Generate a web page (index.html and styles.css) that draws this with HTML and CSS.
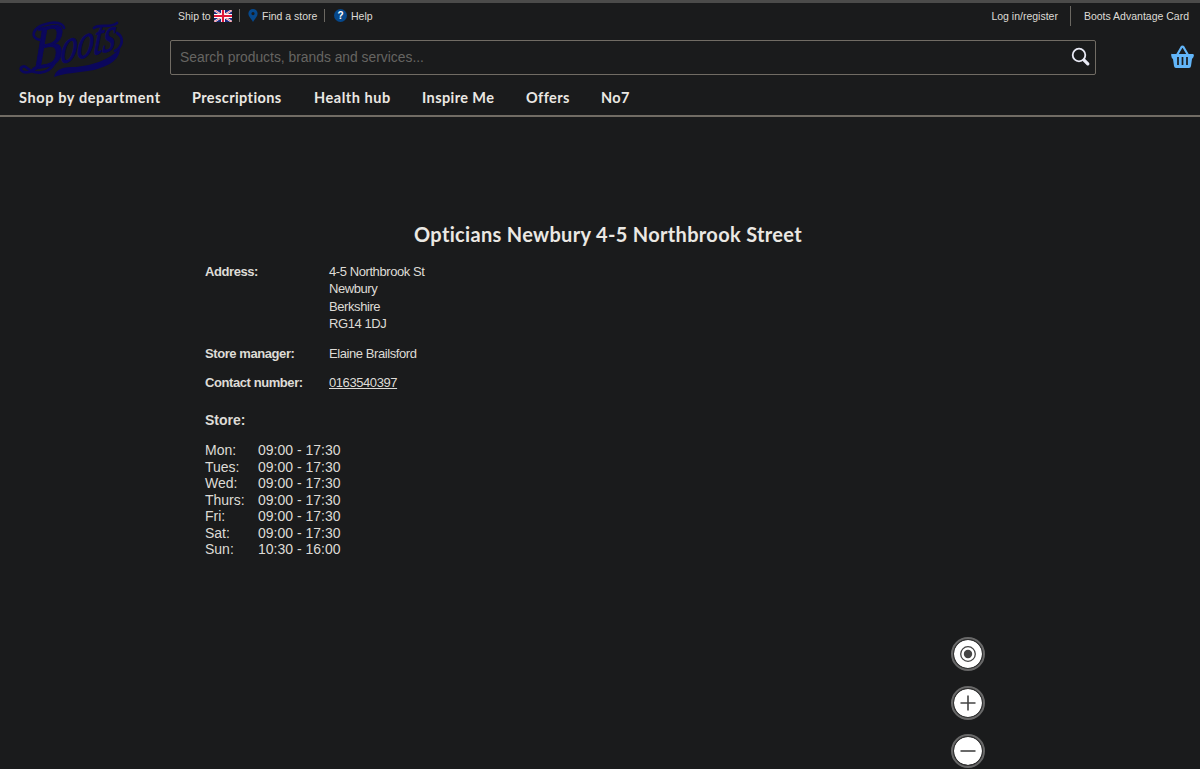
FILE: index.html
```html
<!DOCTYPE html>
<html lang="en">
<head>
    <meta charset="UTF-8">
    <meta name="viewport" content="width=device-width, initial-scale=1.0">
    <title>Opticians Newbury 4-5 Northbrook Street - Boots</title>
    <link rel="stylesheet" href="styles.css">
</head>
<body>
    <header class="header">
        <a class="logo" href="#">
            <svg width="110" height="60" viewBox="0 0 110 60">
                <text class="logo-b" transform="translate(14 52) rotate(-12) skewX(-14) scale(.84 1)">B</text>
                <text class="logo-rest" transform="translate(42 46) rotate(-15) skewX(-20)" textLength="57" lengthAdjust="spacingAndGlyphs">oots</text>
                <path class="logo-line" d="M20 47 C16 55 6 56 3 52 C2 49 6 47 9 50 C17 57 30 56 36 46"/>
                <path class="logo-line" d="M22 22 C11 20 15 9 28 6 C37 3 45 5 46 10 M76 10 C83 5 91 11 99 5"/>
                <path class="logo-line" d="M99 15 C107 20 104 29 97 33"/>
                <path class="logo-fill" d="M36 59 C38 50 46 49 58 49 C76 47 90 42 102 31 C101 43 90 48 76 52 C59 55 46 55 36 59Z"/>
            </svg>
        </a>
        <div class="header-main">
            <div class="top-links">
                <a class="ship" href="#">Ship to
                    <svg width="18" height="12" viewBox="0 0 18 12">
                        <path fill="#1b287d" d="M0 0h18v12H0z"/>
                        <path stroke="#fff" stroke-width="2" d="M0 0l18 12M18 0L0 12"/>
                        <path stroke="#e3304d" stroke-width=".7" d="M0 0l18 12M18 0L0 12"/>
                        <path stroke="#fff" stroke-width="4" d="M9 0v12M0 6h18"/>
                        <path stroke="#df1739" stroke-width="2.2" d="M9 0v12M0 6h18"/>
                    </svg>
                </a>
                <a class="find" href="#">
                    <svg width="10" height="13" viewBox="0 0 10 13">
                        <path fill="#06488b" fill-rule="evenodd" d="M5 0a4.6 4.6 0 0 1 4.6 4.6C9.6 8 6.5 10 5 13 3.5 10 .4 8 .4 4.6A4.6 4.6 0 0 1 5 0zM5 3a1.6 1.6 0 1 0 0 3.2A1.6 1.6 0 0 0 5 3z"/>
                    </svg>
                    Find a store
                </a>
                <a class="help" href="#"><span class="help-icon">?</span>Help</a>
            </div>
            <form class="search">
                <input type="text" placeholder="Search products, brands and services...">
                <svg width="20" height="20" viewBox="0 0 20 20" fill="none" stroke="#e9eaf5">
                    <circle cx="8" cy="8" r="6.3" stroke-width="1.8"/>
                    <path stroke-width="3.3" stroke-linecap="round" d="M13.3 13.3l3.5 3.5"/>
                </svg>
            </form>
        </div>
        <div class="header-side">
            <div class="account">
                <a href="#">Log in/register</a>
                <a href="#">Boots Advantage Card</a>
            </div>
            <a class="basket" href="#">
                <svg width="24" height="24" viewBox="0 0 24 24">
                    <path fill="none" stroke="#62b5f8" stroke-width="2.2" d="M6 10L10.3 2.5Q11.5.8 12.7 2.5L17 10"/>
                    <path fill="#62b5f8" d="M1 9h21q1 0 .9 1.5T21 14l-1 7q-.3 2-2 2H5q-1.7 0-2-2L2 14Q.4 13 .2 10.5T1 9z"/>
                    <path stroke="#1a1b1c" stroke-width="1.7" d="M7 12v8M11.5 12v8M16 12v8"/>
                </svg>
            </a>
        </div>
    </header>
    <nav class="nav">
        <a class="nav-dept" href="#">Shop by department</a>
        <a class="nav-presc" href="#">Prescriptions</a>
        <a class="nav-health" href="#">Health hub</a>
        <a class="nav-inspire" href="#">Inspire Me</a>
        <a class="nav-offers" href="#">Offers</a>
        <a href="#">No7</a>
    </nav>

    <main class="store">
        <h1>Opticians Newbury 4-5 Northbrook Street</h1>
        <dl class="details">
            <dt>Address:</dt>
            <dd>4-5 Northbrook St<br>Newbury<br>Berkshire<br>RG14 1DJ</dd>
            <dt>Store manager:</dt>
            <dd>Elaine Brailsford</dd>
            <dt>Contact number:</dt>
            <dd><a href="#">0163540397</a></dd>
        </dl>
        <h2>Store:</h2>
        <table class="hours">
            <tr><td>Mon:</td><td>09:00 - 17:30</td></tr>
            <tr><td>Tues:</td><td>09:00 - 17:30</td></tr>
            <tr><td>Wed:</td><td>09:00 - 17:30</td></tr>
            <tr><td>Thurs:</td><td>09:00 - 17:30</td></tr>
            <tr><td>Fri:</td><td>09:00 - 17:30</td></tr>
            <tr><td>Sat:</td><td>09:00 - 17:30</td></tr>
            <tr><td>Sun:</td><td>10:30 - 16:00</td></tr>
        </table>
    </main>

    <div class="map-controls">
        <button type="button" aria-label="Locate">
            <svg width="28" height="28" viewBox="0 0 28 28"><circle cx="14" cy="14" r="7.3" fill="none" stroke="#444" stroke-width="1.3"/><circle cx="14" cy="14" r="4.2" fill="#444"/></svg>
        </button>
        <button type="button" aria-label="Zoom in">
            <svg width="28" height="28" viewBox="0 0 28 28"><path stroke="#444" stroke-width="1.6" d="M6.5 14h15M14 6.5v15"/></svg>
        </button>
        <button type="button" aria-label="Zoom out">
            <svg width="28" height="28" viewBox="0 0 28 28"><path stroke="#444" stroke-width="1.6" d="M6.5 14h15"/></svg>
        </button>
    </div>
</body>
</html>
```
FILE: styles.css
```css
* {
    box-sizing: border-box;
}
body {
    margin: 0;
    height: 769px;
    overflow: hidden;
    border-top: 3px solid #4b4b4a;
    background-color: #1a1b1c;
    color: #dedbd6;
    font-family: "Liberation Sans", Arial, sans-serif;
}
a {
    color: inherit;
    text-decoration: none;
}
.header {
    display: flex;
    height: 78px;
}
.logo {
    flex: none;
    width: 170px;
    padding: 15px 0 0 18px;
}
.logo svg {
    overflow: visible;
}
.logo-b, .logo-rest {
    font-family: "Liberation Serif", serif;
    font-style: italic;
    fill: #0b075c;
    stroke: #0b075c;
    stroke-width: 1px;
}
.logo-b {
    font-size: 60px;
}
.logo-rest {
    font-size: 46px;
}
.logo-line {
    fill: none;
    stroke: #0b075c;
    stroke-width: 2.7px;
    stroke-linecap: round;
}
.logo-fill {
    fill: #0b075c;
}
.header-main {
    flex: none;
    width: 926px;
}
.top-links {
    display: flex;
    align-items: center;
    height: 25px;
    padding-left: 8px;
    font-size: 10.5px;
}
.top-links a {
    display: flex;
    align-items: center;
    height: 13px;
}
.ship {
    gap: 3px;
    width: 62px;
    border-right: 1px solid #6b6862;
}
.find {
    gap: 4px;
    width: 85px;
    padding-left: 8px;
    border-right: 1px solid #6b6862;
}
.help {
    gap: 4px;
    padding-left: 9px;
}
.help-icon {
    width: 13px;
    height: 13px;
    border-radius: 50%;
    background-color: #06488b;
    color: #fff;
    font-size: 10px;
    font-weight: bold;
    line-height: 13px;
    text-align: center;
}
.search {
    display: flex;
    align-items: center;
    height: 35px;
    margin-top: 12px;
    padding: 0 4px 1px 9px;
    border: 1px solid #716c64;
    border-radius: 2px;
}
.search input {
    flex: 1;
    padding: 0;
    border: 0;
    outline: 0;
    background: none;
    color: #dedbd6;
    font: 13.85px "Liberation Sans", Arial, sans-serif;
}
.search input::placeholder {
    color: #666562;
    opacity: 1;
}
.header-side {
    flex: 1;
    min-width: 0;
    display: flex;
    flex-direction: column;
    align-items: flex-end;
}
.account {
    display: flex;
    align-items: center;
    height: 20px;
    margin-top: 3px;
    padding-right: 11px;
    font-size: 10.5px;
    line-height: 20px;
    white-space: nowrap;
}
.account a + a {
    margin-left: 12px;
    padding-left: 13px;
    border-left: 1px solid #6b6862;
}
.basket {
    height: 24px;
    margin: 19px 5px 0 0;
}
.nav {
    display: flex;
    gap: 32px;
    height: 36px;
    padding: 7px 0 0 19px;
    border-bottom: 2px solid #716c64;
    color: #ebe8e3;
    font-family: Lato, sans-serif;
    font-size: 14.5px;
    font-weight: bold;
    line-height: 20px;
    letter-spacing: 0.4px;
    white-space: nowrap;
}
.nav-dept {
    width: 141px;
    letter-spacing: 0.62px;
}
.nav-presc {
    width: 90px;
}
.nav-health {
    width: 76px;
    letter-spacing: 0.55px;
}
.nav-inspire {
    width: 72px;
}
.nav-offers {
    width: 43px;
}
.store {
    width: 806px;
    margin-left: 205px;
    padding-top: 102px;
}
.store h1 {
    margin: 0;
    color: #ebe8e3;
    font-family: Lato, sans-serif;
    font-size: 20px;
    font-weight: bold;
    line-height: 30px;
    letter-spacing: 0.32px;
    text-align: center;
}
.details {
    display: grid;
    grid-template-columns: 124px 1fr;
    row-gap: 12px;
    margin: 14px 0 0;
    font-size: 13px;
    line-height: 17.4px;
    letter-spacing: -0.42px;
}
.details dt {
    font-weight: bold;
}
.details dd {
    margin: 0;
}
.details a {
    text-decoration: underline;
}
.store h2 {
    margin: 20px 0 0;
    font-size: 14px;
    line-height: 18px;
}
.hours {
    margin-top: 13px;
    border-collapse: collapse;
    font-size: 14px;
    line-height: 16.5px;
}
.hours td {
    padding: 0;
}
.hours td:first-child {
    width: 53px;
}
/* floating map buttons */
.map-controls {
    position: absolute;
    top: 637px;
    left: 951px;
    display: flex;
    flex-direction: column;
    gap: 14.5px;
}
.map-controls button {
    display: flex;
    width: 34px;
    height: 34px;
    padding: 1px;
    border: 2px solid #696969;
    border-radius: 50%;
    background: #fff content-box;
    box-shadow: inset 0 0 0 1px #333;
}
```
